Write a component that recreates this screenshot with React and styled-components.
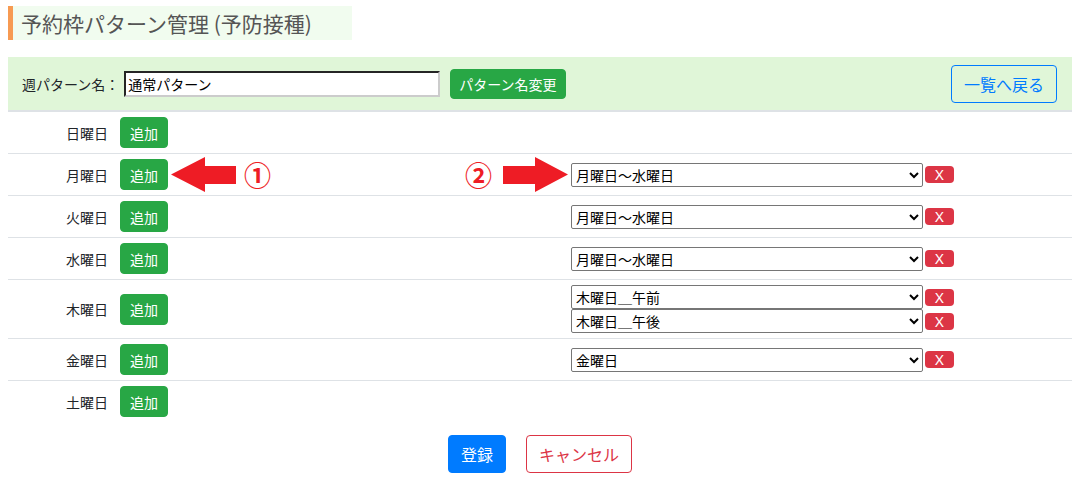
import React from 'react'
import styled, { createGlobalStyle } from 'styled-components'

const GlobalStyle = createGlobalStyle`
  body {
    margin: 0;
    background: #fff;
    font-family: "Noto Sans CJK JP", "Noto Sans", sans-serif;
    color: #212529;
  }
`

const Page = styled.div`
  padding: 6px 8px 0;
`

const Title = styled.h1`
  display: inline-block;
  margin: 0;
  padding: 0 40px 0 8px;
  height: 34px;
  line-height: 34px;
  font-size: 21px;
  font-weight: normal;
  color: #555;
  background: #f1fcef;
  border-left: 5px solid #f79a52;
`

const Header = styled.div`
  display: flex;
  align-items: center;
  margin-top: 17px;
  height: 53px;
  padding: 0 15px 0 14px;
  background: #e0f6d8;
  border-bottom: 2px solid #dee2e6;
  font-size: 14px;
`

const NameLabel = styled.label`
  margin-right: 5px;
`

const NameInput = styled.input`
  width: 316px;
  height: 26px;
  box-sizing: border-box;
  padding: 0 2px;
  font-family: inherit;
  font-size: 14px;
  border: 2px inset #ccc;
  border-top-color: #7a7a7a;
  border-left-color: #7a7a7a;
`

const Button = styled.button`
  box-sizing: border-box;
  height: ${p => p.$h || 31}px;
  padding: 0 ${p => p.$px || 9}px;
  font-family: inherit;
  font-size: ${p => p.$fs || 14}px;
  border-radius: 4px;
  cursor: pointer;
  border: 1px solid ${p => p.$color};
  background: ${p => (p.$outline ? 'transparent' : p.$color)};
  color: ${p => (p.$outline ? p.$color : '#fff')};
  white-space: nowrap;
`

const Spacer = styled.div`
  flex: 1;
`

const Row = styled.div`
  display: grid;
  grid-template-columns: 112px 451px 1fr;
  align-items: center;
  padding: 5px 0;
  border-bottom: ${p => (p.$last ? 'none' : '1px solid #dee2e6')};
  font-size: 14px;
`

const DayLabel = styled.div`
  text-align: right;
  padding-right: 12px;
`

const ActionCell = styled.div`
  display: flex;
  align-items: center;
  height: 31px;
`

const Arrow = styled.svg`
  display: block;
  flex: none;
  margin-left: ${p => p.$ml || 0}px;
  margin-right: ${p => p.$mr || 0}px;
`

const Circled = styled.span`
  width: 29px;
  margin-left: ${p => p.$ml || 0}px;
  text-align: center;
  font-size: 27px;
  font-weight: bold;
  line-height: 1;
  color: #ee1c25;
`

const Entries = styled.div`
  display: flex;
  flex-direction: column;
`

const Entry = styled.div`
  display: flex;
  align-items: center;
  height: 24px;
`

const Select = styled.select`
  width: 352px;
  height: 24px;
  font-family: inherit;
  font-size: 14px;
  color: #000;
  border: 1px solid #767676;
  border-radius: 2px;
  background: #fff;
`

const RemoveButton = styled.button`
  width: 29px;
  height: 17px;
  margin-left: 2px;
  padding: 0;
  border: none;
  border-radius: 4px;
  background: #dc3545;
  color: #fff;
  font-family: "Noto Sans", sans-serif;
  font-size: 15px;
  line-height: 17px;
`

const Footer = styled.div`
  display: flex;
  justify-content: center;
  gap: 20px;
  padding-top: 13px;
`

const options = ['月曜日～水曜日', '木曜日＿午前', '木曜日＿午後', '金曜日']

const days = [
  { name: '日曜日', entries: [] },
  { name: '月曜日', entries: ['月曜日～水曜日'], note: true },
  { name: '火曜日', entries: ['月曜日～水曜日'] },
  { name: '水曜日', entries: ['月曜日～水曜日'] },
  { name: '木曜日', entries: ['木曜日＿午前', '木曜日＿午後'] },
  { name: '金曜日', entries: ['金曜日'] },
  { name: '土曜日', entries: [] },
]

function LeftArrow() {
  return (
    <Arrow width="65" height="35" viewBox="0 0 65 35" $ml={3}>
      <polygon points="0,17.5 34,0 34,9 65,9 65,27 34,27 34,35" fill="#ee1c25" />
    </Arrow>
  )
}

function RightArrow() {
  return (
    <Arrow width="65" height="35" viewBox="0 0 65 35" $ml={10} $mr={3}>
      <polygon points="0,9 32,9 32,0 65,17.5 32,35 32,27 0,27" fill="#ee1c25" />
    </Arrow>
  )
}

export default function App() {
  return (
    <Page>
      <GlobalStyle />
      <Title>予約枠パターン管理 (予防接種)</Title>
      <Header>
        <NameLabel>週パターン名：</NameLabel>
        <NameInput defaultValue="通常パターン" />
        <Button $color="#28a745" $h={30} $px={8} style={{ marginLeft: 10 }}>
          パターン名変更
        </Button>
        <Spacer />
        <Button $color="#007bff" $outline $h={38} $px={12} $fs={16}>
          一覧へ戻る
        </Button>
      </Header>
      {days.map((day, i) => (
        <Row key={day.name} $last={i === days.length - 1}>
          <DayLabel>{day.name}</DayLabel>
          <ActionCell>
            <Button $color="#28a745">追加</Button>
            {day.note && (
              <>
                <LeftArrow />
                <Circled $ml={7}>①</Circled>
                <Spacer />
                <Circled>②</Circled>
                <RightArrow />
              </>
            )}
          </ActionCell>
          <Entries>
            {day.entries.map((value, j) => (
              <Entry key={j}>
                <Select defaultValue={value}>
                  {options.map(o => (
                    <option key={o}>{o}</option>
                  ))}
                </Select>
                <RemoveButton>X</RemoveButton>
              </Entry>
            ))}
          </Entries>
        </Row>
      ))}
      <Footer>
        <Button $color="#007bff" $h={38} $px={12} $fs={16}>
          登録
        </Button>
        <Button $color="#dc3545" $outline $h={38} $px={12} $fs={16}>
          キャンセル
        </Button>
      </Footer>
    </Page>
  )
}
